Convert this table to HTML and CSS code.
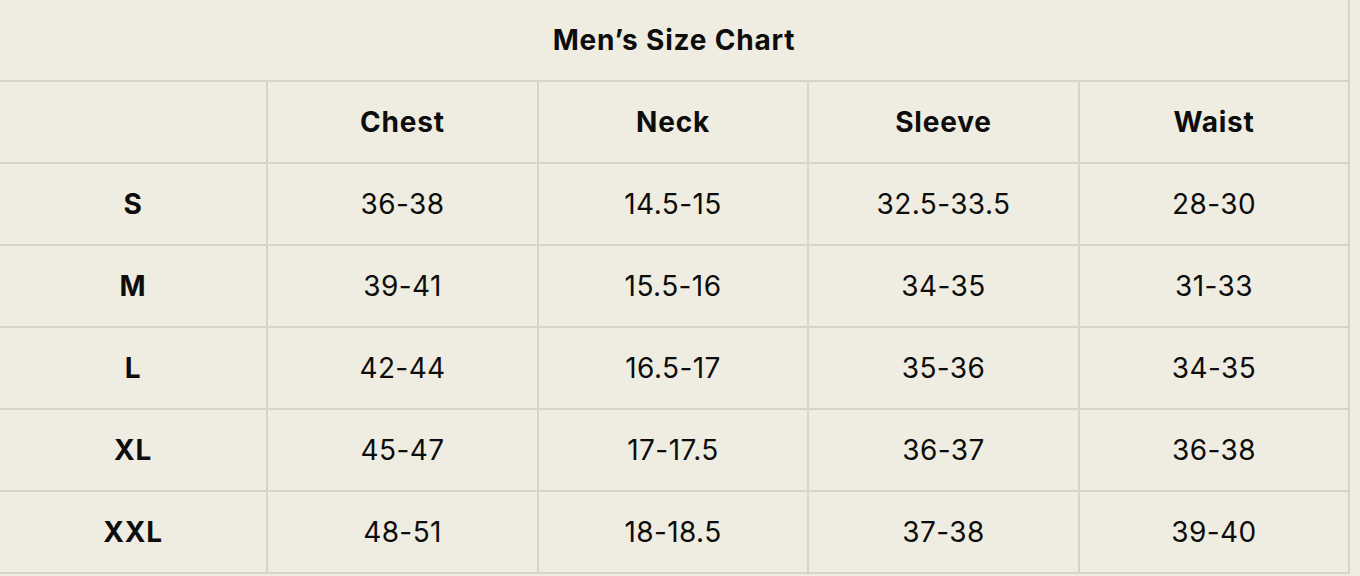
FILE: index.html
```html
<!DOCTYPE html>
<html lang="en">
<head>
<meta charset="utf-8">
<title>Men’s Size Chart</title>
<link rel="stylesheet" href="styles.css">
</head>
<body>
<div class="chart">
  <div class="cell head title">Men’s Size Chart</div>
  <div class="cell head"></div>
  <div class="cell head">Chest</div>
  <div class="cell head">Neck</div>
  <div class="cell head">Sleeve</div>
  <div class="cell head">Waist</div>

  <div class="cell head">S</div>
  <div class="cell">36-38</div>
  <div class="cell">14.5-15</div>
  <div class="cell">32.5-33.5</div>
  <div class="cell">28-30</div>

  <div class="cell head">M</div>
  <div class="cell">39-41</div>
  <div class="cell">15.5-16</div>
  <div class="cell">34-35</div>
  <div class="cell">31-33</div>

  <div class="cell head">L</div>
  <div class="cell">42-44</div>
  <div class="cell">16.5-17</div>
  <div class="cell">35-36</div>
  <div class="cell">34-35</div>

  <div class="cell head">XL</div>
  <div class="cell">45-47</div>
  <div class="cell">17-17.5</div>
  <div class="cell">36-37</div>
  <div class="cell">36-38</div>

  <div class="cell head">XXL</div>
  <div class="cell">48-51</div>
  <div class="cell">18-18.5</div>
  <div class="cell">37-38</div>
  <div class="cell">39-40</div>
</div>
</body>
</html>
```

FILE: styles.css
```css
html, body {
  margin: 0;
  padding: 0;
  background: #efede1;
}

body {
  font-family: Inter, Lato, "Liberation Sans", sans-serif;
  color: #0d0d0d;
  overflow: hidden;
}

.chart {
  display: grid;
  grid-template-columns: 266px 269px 268px 269px 268px;
  grid-auto-rows: 80px;
  gap: 2px;
  padding: 2px;
  margin: -2px 0 0 -2px;
  width: max-content;
  background: #d6d3c7;
}

.cell {
  display: flex;
  align-items: center;
  justify-content: center;
  padding-bottom: 0;
  background: #efede1;
  font-size: 28px;
  font-weight: 400;
  letter-spacing: 0.4px;
}

.head {
  font-weight: 700;
  letter-spacing: 0.8px;
}

.title {
  grid-column: 1 / -1;
}
```
